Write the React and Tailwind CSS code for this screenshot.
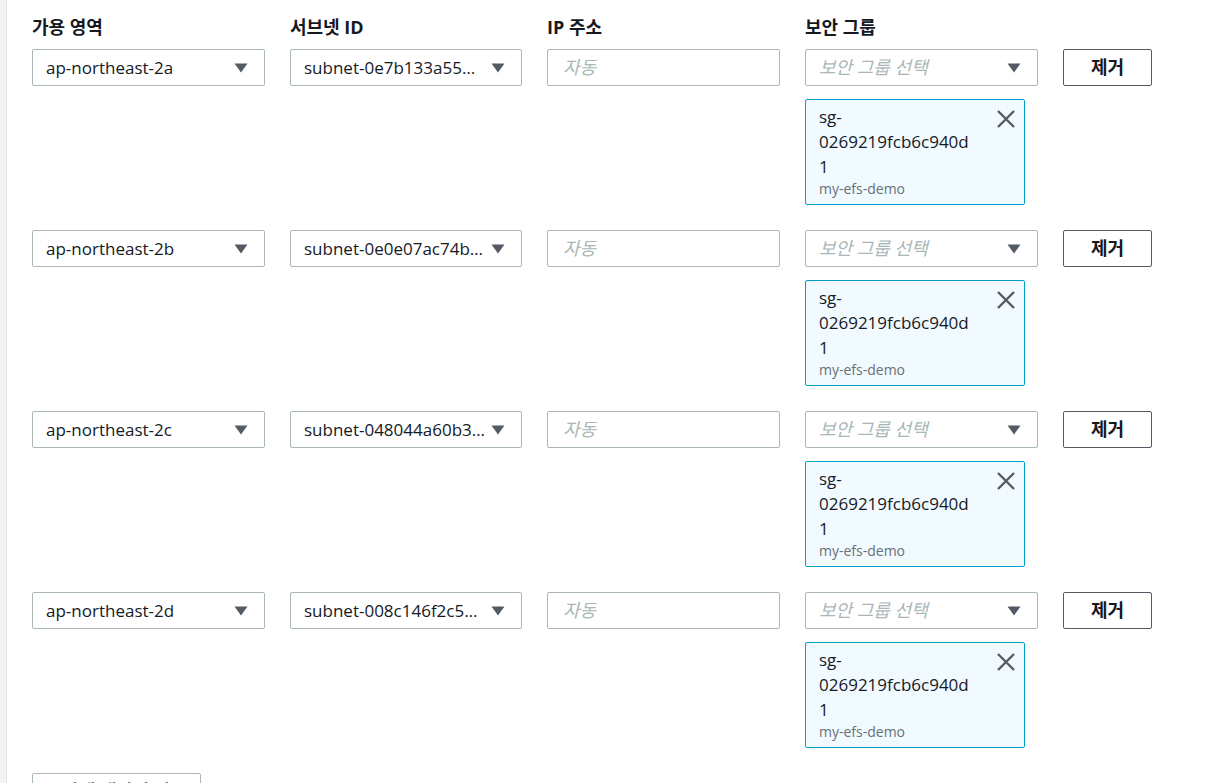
import React from "react";

const rows = [
  { az: "ap-northeast-2a", subnet: "subnet-0e7b133a55d1c2e3f" },
  { az: "ap-northeast-2b", subnet: "subnet-0e0e07ac74b9a1f20" },
  { az: "ap-northeast-2c", subnet: "subnet-048044a60b3e7d915" },
  { az: "ap-northeast-2d", subnet: "subnet-008c146f2c58a0b47" },
];

function Caret() {
  return (
    <svg width="14" height="10" viewBox="0 0 14 10" className="shrink-0">
      <path d="M0.5 0.5h13L7 9.5z" fill="#545b64" />
    </svg>
  );
}

function Select({ value, placeholder }) {
  return (
    <div className="h-[37px] border border-[#aab7b8] rounded-[2px] bg-white flex items-center pl-[13px] pr-[16px] gap-[6px]">
      {value ? (
        <span className="flex-1 truncate text-[17px] text-[#16191f]">{value}</span>
      ) : (
        <span className="flex-1 truncate text-[18px] italic text-[#aab7b8]">{placeholder}</span>
      )}
      <Caret />
    </div>
  );
}

function Token() {
  return (
    <div className="mt-[13px] w-[220px] h-[106px] border border-[#00a1c9] rounded-[2px] bg-[#f1faff] flex pl-[13px] pr-[8px] pt-[4px]">
      <div className="w-[156px] break-words">
        <div className="text-[17px] leading-[25px] text-[#16191f]">sg-0269219fcb6c940d1</div>
        <div className="text-[14px] leading-[19px] text-[#687078]">my-efs-demo</div>
      </div>
      <div className="flex-1 flex justify-end pt-[5px]">
        <svg width="20" height="20" viewBox="0 0 20 20">
          <path d="M2 2L18 18M18 2L2 18" stroke="#545b64" strokeWidth="2.4" />
        </svg>
      </div>
    </div>
  );
}

export default function App() {
  return (
    <div
      className="h-[783px] overflow-hidden bg-white flex"
      style={{ fontFamily: '"Open Sans", "Noto Sans CJK KR", sans-serif' }}
    >
      <div className="w-[7px] bg-[#f2f3f3] border-r border-[#e1e4e4] shrink-0" />
      <div className="pl-[25px] pt-[13px]">
        <div className="grid grid-cols-[233px_232px_233px_233px_89px] gap-x-[25px]">
          <div className="text-[18px] font-bold text-[#16191f] leading-[28px] mb-[8px]">가용 영역</div>
          <div className="text-[18px] font-bold text-[#16191f] leading-[28px] mb-[8px]">서브넷 ID</div>
          <div className="text-[18px] font-bold text-[#16191f] leading-[28px] mb-[8px]">IP 주소</div>
          <div className="text-[18px] font-bold text-[#16191f] leading-[28px] mb-[8px]">보안 그룹</div>
          <div />
          {rows.map((r) => (
            <React.Fragment key={r.az}>
              <div>
                <Select value={r.az} />
              </div>
              <div>
                <Select value={r.subnet} />
              </div>
              <div>
                <div className="h-[37px] border border-[#aab7b8] rounded-[2px] bg-white flex items-center pl-[15px]">
                  <span className="text-[18px] italic text-[#aab7b8]">자동</span>
                </div>
              </div>
              <div className="pb-[25px]">
                <Select placeholder="보안 그룹 선택" />
                <Token />
              </div>
              <div>
                <button className="w-[89px] h-[37px] border border-[#545b64] rounded-[2px] bg-white text-[18px] font-bold text-[#16191f]">
                  제거
                </button>
              </div>
            </React.Fragment>
          ))}
        </div>
        <button className="w-[169px] h-[37px] border border-[#aab7b8] rounded-[2px] bg-white text-[18px] font-bold text-[#545b64]">
          탑재 대상 추가
        </button>
      </div>
    </div>
  );
}
